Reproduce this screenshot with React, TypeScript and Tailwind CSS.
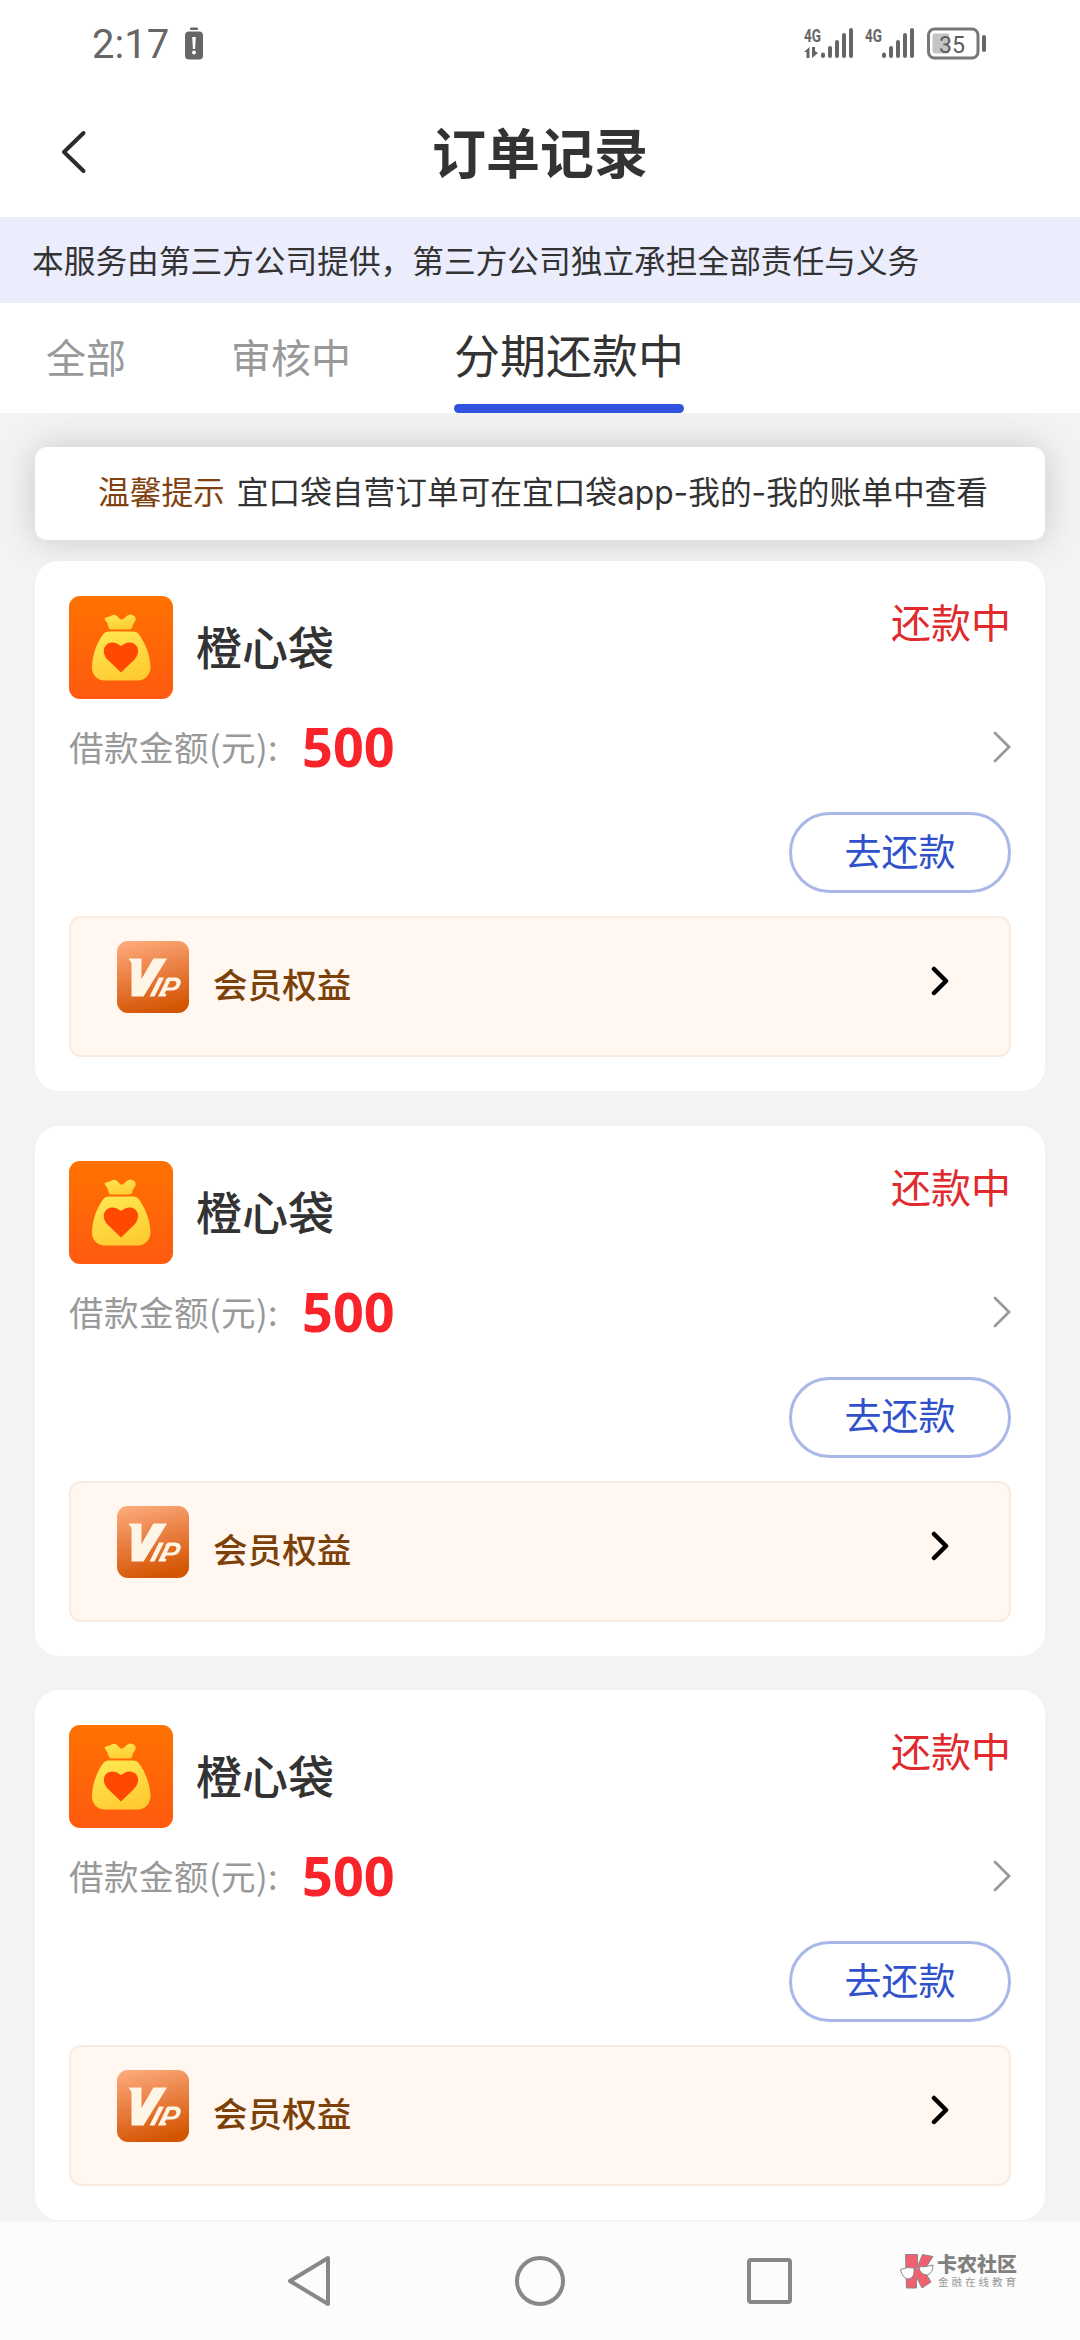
import React from "react";

function StatusBar() {
  return (
    <div className="flex h-[87px] items-center justify-between pl-[92px] pr-[93px] text-[#666]">
      <div className="flex items-center gap-[15px]">
        <span className="pt-[2px] font-[Roboto,sans-serif] text-[40px] leading-[40px]">2:17</span>
        <svg width="20" height="34" viewBox="0 0 20 34">
          <rect x="6" y="0.5" width="8" height="2.5" rx="1" fill="#666" />
          <rect x="1" y="4.500" width="18" height="28" rx="4" fill="#666" />
          <path d="M8.2 10h3.6l-0.7 12H8.9z" fill="#fff" />
          <circle cx="10" cy="25.5" r="2" fill="#fff" />
        </svg>
      </div>
      <svg width="184" height="46" viewBox="803 20 184 46" fill="#666">
        <text x="804" y="40.5" fontFamily="Roboto" fontSize="19" fontWeight="700" textLength="17" lengthAdjust="spacingAndGlyphs">4G</text>
        <path d="M804 51l5.500-5v11h-3v-6zM812 46h3v4l3 2-6 5z" />
        <g stroke="#666" strokeWidth="4" strokeLinecap="round">
          <path d="M823 53.500v1.500M830 47v8M837 41v14M844 34v21M851 29v26" />
          <path d="M884 53.500v1.500M891 47v8M898 41v14M905 34v21M912 29v26" />
        </g>
        <text x="865" y="40.500" fontFamily="Roboto" fontSize="19" fontWeight="700" textLength="17" lengthAdjust="spacingAndGlyphs">4G</text>
        <rect x="928.500" y="28" width="49.500" height="29" rx="6" fill="none" stroke="#777" strokeWidth="3" />
        <path d="M935 32.500h14v20h-14q-2.500 0-2.500-3v-14q0-3 2.500-3z" fill="#c4c4c4" />
        <text x="939" y="51.500" fontFamily="Roboto" fontSize="24.500" textLength="26" lengthAdjust="spacingAndGlyphs" fill="#5c5c5c">35</text>
        <rect x="982" y="34" width="4" height="17" rx="2" />
      </svg>
    </div>
  );
}

function BagIcon() {
  return (
    <svg className="shrink-0" width="104" height="104" viewBox="0 0 104 104">
      <defs>
        <linearGradient id="bagBg" x1="0" y1="0" x2="0" y2="1">
          <stop offset="0" stopColor="#ff7200" />
          <stop offset="1" stopColor="#ff5a10" />
        </linearGradient>
        <linearGradient id="bagBody" x1="0.3" y1="0" x2="0.7" y2="1">
          <stop offset="0" stopColor="#ffe650" />
          <stop offset="1" stopColor="#ffca30" />
        </linearGradient>
      </defs>
      <rect width="104" height="103" rx="11" fill="url(#bagBg)" />
      <path d="M39.500 31l-1-3.500-3-4.500q0-1.500 3-2 2.500-0.300 4-1.500 3-1.500 5.500 0.500l3 3q2 1.500 4-0.500l3.500-3q2.500-1.500 5-0.500 4 1.500 3 5.500l-2.500 4-1 3.500q-1 1.500-3 1.500H42.500q-2.500 0-3-2.500z" fill="url(#bagBody)" />
      <path d="M40 35.500h24q4 0 6 3c6 8 11 20 11.500 32 0 8-5 14-13 14H36c-8 0-13.500-6-13-14C23.500 58.500 28 46.500 34 38.500q2-3 6-3z" fill="url(#bagBody)" />
      <path d="M52 76.500L39 64C29 53 39 43 48 47.500Q50.500 49 52 50 53.500 49 56 47.500C65 43 75 53 65 64z" fill="#ff4800" />
    </svg>
  );
}

function VipIcon() {
  return (
    <svg className="shrink-0" width="72" height="72" viewBox="0 0 72 72">
      <defs>
        <linearGradient id="vipBg" x1="0.3" y1="0" x2="0.55" y2="1">
          <stop offset="0" stopColor="#fba877" />
          <stop offset="0.45" stopColor="#ea8043" />
          <stop offset="1" stopColor="#d35400" />
        </linearGradient>
      </defs>
      <rect width="72" height="72" rx="11" fill="url(#vipBg)" />
      <path d="M11.500 17.500H24.500V38L35.500 19l1-1.500H50L26.500 55.500H14.500V22z" fill="#fff5e6" />
      <path d="M42 36.500h5L37.500 55.500H32.500z" fill="#fff5e6" />
      <path fillRule="evenodd" d="M51 36.500h8q6 1 4.500 6.500-2 6.500-8.500 6.500h-6l-1.500 3.500h2l-1 2.500H41l8-16h-1zM53 40L50 46.500h5q4-0.500 4.500-4 0-2.500-2-2.500z" fill="#fff5e6" />
    </svg>
  );
}

function OrderCard() {
  return (
    <article className="flex h-[530px] flex-col rounded-[24px] bg-white px-[34px] pt-[35px]">
      <div className="flex h-[104px] items-start">
        <BagIcon />
        <h2 className="ml-[23px] mt-[16px] flex-1 text-[46px] font-medium leading-[66px] text-[#333]">橙心袋</h2>
        <span className="mt-[-5px] text-[40px] leading-[60px] text-[#e02a2d]">还款中</span>
      </div>
      <div className="mt-[17px] flex h-[60px] items-center">
        <span className="pb-[2px] text-[34.600px] leading-[60px] tracking-[0.4px] text-[#999]">借款金额(元):</span>
        <strong className="ml-[24px] pb-[2px] font-['Noto_Sans',sans-serif] text-[54px] font-bold leading-[60px] text-[#f9242a]">500</strong>
        <svg className="ml-auto" width="18" height="32" viewBox="0 0 18 32" fill="none" stroke="#999" strokeWidth="2.800" strokeLinecap="round">
          <path d="M2 2L16 16L2 30" />
        </svg>
      </div>
      <button className="ml-auto mt-[35px] flex h-[81px] w-[222px] shrink-0 items-center justify-center rounded-full border-[3px] border-[#aab8e8] pb-[6px] text-[37px] leading-[54px] text-[#3050cc]">
        去还款
      </button>
      <div className="mt-[23px] flex h-[141px] shrink-0 items-start rounded-[12px] border-2 border-[#faebe0] bg-[#fff7f0] pl-[46px] pr-[60px] pt-[23px]">
        <VipIcon />
        <span className="ml-[24px] mt-[17px] text-[34.600px] font-medium leading-[50px] text-[#7b4108]">会员权益</span>
        <svg className="ml-auto mt-[25px]" width="18" height="30" viewBox="0 0 18 30" fill="none" stroke="#000" strokeWidth="4.500" strokeLinecap="round" strokeLinejoin="round">
          <path d="M3 3L15 15L3 27" />
        </svg>
      </div>
    </article>
  );
}

function Watermark() {
  return (
    <div className="absolute left-[899px] top-[29px] flex items-start">
      <svg width="36" height="40" viewBox="0 0 36 40" stroke="#888" strokeWidth="1">
        <path d="M6.500 3.500h12v12l5-12 10.500 2-9 14 7 11.500-9 6-5.500-11v11H7.500z" fill="#f0606f" />
        <path d="M1.500 18.500q7-3 13.500-1.500 1 10-5.500 11Q3 27 1.500 18.500zM20 16q7 0 14-2 0 8-5.500 10Q21 24 20 16zM15 18q3-2 5-1" fill="#fff" />
      </svg>
      <div className="ml-[2px] flex flex-col pt-px">
        <span className="text-[20px] font-black leading-[24px] text-[#808080]">卡农社区</span>
        <span className="ml-px text-[10.500px] leading-[12px] tracking-[3px] text-[#999]">金融在线教育</span>
      </div>
    </div>
  );
}

function NavBar() {
  return (
    <nav className="relative h-[119px] shrink-0 border-t border-[#f5f5f5] bg-[#fcfcfc]">
      <div className="flex items-center pl-[287px] pt-[33px]">
        <svg width="44" height="52" viewBox="0 0 44 52" fill="none" stroke="#888" strokeWidth="4" strokeLinejoin="round">
          <path d="M41 3V49L3 26z" />
        </svg>
        <svg className="ml-[183px]" width="52" height="52" viewBox="0 0 52 52" fill="none" stroke="#888" strokeWidth="4">
          <circle cx="26" cy="26" r="23" />
        </svg>
        <svg className="ml-[180px]" width="48" height="48" viewBox="0 0 48 48" fill="none" stroke="#888" strokeWidth="4">
          <rect x="3" y="3" width="41" height="42" rx="2" />
        </svg>
      </div>
      <Watermark />
    </nav>
  );
}

export default function App() {
  return (
    <div className="flex h-[2340px] w-[1080px] flex-col overflow-hidden bg-[#f3f3f3] font-['Noto_Sans_CJK_SC',sans-serif]">
      <div className="h-[217px] shrink-0 bg-white">
        <StatusBar />
        <header className="grid h-[130px] grid-cols-[1fr_auto_1fr] items-center pl-[61px] pr-[61px]">
          <svg width="26" height="46" viewBox="0 0 26 46" fill="none" stroke="#2b2b2b" strokeWidth="4" strokeLinecap="round" strokeLinejoin="round">
            <path d="M22.500 4L3 23L22.500 42" />
          </svg>
          <h1 className="pb-[2px] text-[54px] font-bold leading-[80px] text-[#333]">订单记录</h1>
        </header>
      </div>
      <p className="h-[86px] shrink-0 whitespace-nowrap bg-[#ebedfd] pl-[32px] text-[31.700px] leading-[84px] text-[#333]">
        本服务由第三方公司提供，第三方公司独立承担全部责任与义务
      </p>
      <div className="flex h-[110px] shrink-0 items-start bg-white pl-[46px] text-[40px] leading-[106px] text-[#999]">
        <span>全部</span>
        <span className="ml-[105px]">审核中</span>
        <span className="ml-[103px] flex h-[110px] flex-col text-[46px] leading-[101px] text-[#333]">
          <span className="h-[101px]">分期还款中</span>
          <span className="h-[9px] rounded-full bg-[#3052dc]" />
        </span>
      </div>
      <main className="flex h-[1808px] flex-col overflow-hidden px-[35px] pt-[34px]">
        <p className="flex h-[93px] shrink-0 whitespace-nowrap rounded-[12px] bg-white pl-[63px] text-[31.700px] leading-[87px] text-[#333] shadow-[0_0_35px_rgba(0,0,0,0.18)]">
          <span className="mr-[12px] text-[#7f4210]">温馨提示</span>
          <span>
            宜口袋自营订单可在宜口袋<span className="font-[Inter,sans-serif]">app-</span>我的<span className="font-[Inter,sans-serif]">-</span>我的账单中查看
          </span>
        </p>
        <div className="relative mt-[21px] flex flex-col gap-[34.500px]">
          <OrderCard />
          <OrderCard />
          <OrderCard />
        </div>
      </main>
      <NavBar />
    </div>
  );
}
